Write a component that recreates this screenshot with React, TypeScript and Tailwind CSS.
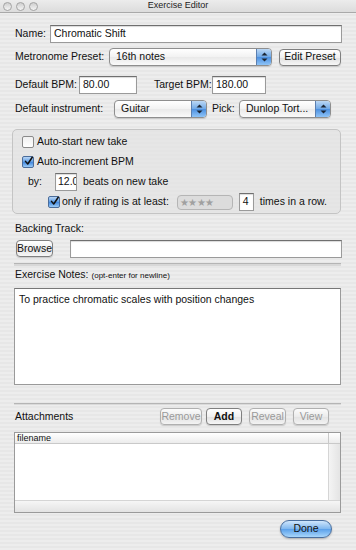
import React from "react";

const font = { fontFamily: '"Liberation Sans", Arial, sans-serif' };

function TextInput({ value, className = "" }: { value?: string; className?: string }) {
  return (
    <div
      className={
        "h-[18px] bg-white border border-[#9a9a9a] border-t-[#6f6f6f] shadow-[inset_0_1px_1px_rgba(0,0,0,0.15)] px-[3px] flex items-center text-[10.5px] text-[#111] overflow-hidden whitespace-nowrap " +
        className
      }
    >
      {value}
    </div>
  );
}

function PopUp({ value, className = "" }: { value: string; className?: string }) {
  return (
    <div
      className={
        "h-[18px] flex items-stretch rounded-[4px] border border-[#8e8e8e] bg-[linear-gradient(#ffffff,#f2f2f2_50%,#e9e9e9_51%,#fafafa)] shadow-[0_1px_1px_rgba(0,0,0,0.15)] overflow-hidden " +
        className
      }
    >
      <div className="flex-1 flex items-center pl-[6px] text-[10.5px] text-[#111] whitespace-nowrap overflow-hidden">{value}</div>
      <div className="w-[15px] flex flex-col items-center justify-center gap-[2px] bg-[linear-gradient(#bcd8f5,#6fa8e6_50%,#4b8fe0_51%,#8fc4f7)] border-l border-[#5b7fb0]">
        <svg width="7" height="4" viewBox="0 0 7 4"><path d="M0.5 3.5 L3.5 0.5 L6.5 3.5 Z" fill="#1b2533" /></svg>
        <svg width="7" height="4" viewBox="0 0 7 4"><path d="M0.5 0.5 L3.5 3.5 L6.5 0.5 Z" fill="#1b2533" /></svg>
      </div>
    </div>
  );
}

function Button({ label, disabled, className = "" }: { label: string; disabled?: boolean; className?: string }) {
  return (
    <div
      className={
        "h-[17px] flex items-center justify-center rounded-[4px] border text-[10.5px] whitespace-nowrap shadow-[0_1px_1px_rgba(0,0,0,0.15)] " +
        (disabled
          ? "border-[#b0b0b0] text-[#9a9a9a] bg-[linear-gradient(#fbfbfb,#ececec_50%,#e2e2e2_51%,#f3f3f3)] "
          : "border-[#7f7f7f] text-[#111] bg-[linear-gradient(#ffffff,#f0f0f0_50%,#e0e0e0_51%,#f7f7f7)] ") +
        className
      }
    >
      {label}
    </div>
  );
}

function Check({ checked }: { checked?: boolean }) {
  return (
    <div
      className={
        "w-[12px] h-[12px] rounded-[2px] border flex items-center justify-center shrink-0 " +
        (checked
          ? "border-[#4a6c9a] bg-[linear-gradient(#b9d6f6,#5c9ce4_50%,#3f86de_51%,#9cccf7)]"
          : "border-[#8a8a8a] bg-[linear-gradient(#f0f0f0,#ffffff)]")
      }
    >
      {checked && (
        <svg width="12" height="12" viewBox="0 0 12 12" className="-mt-[3px] ml-[1px]">
          <path d="M2 6.5 L5 10 L11 1" stroke="#111" strokeWidth="2" fill="none" strokeLinecap="round" strokeLinejoin="round" />
        </svg>
      )}
    </div>
  );
}

export default function App() {
  return (
    <div
      style={font}
      className="w-[356px] h-[550px] overflow-hidden text-[#111] text-[10.5px] bg-[repeating-linear-gradient(180deg,#ededed_0px,#ededed_2px,#e7e7e7_2px,#e7e7e7_4px)] flex flex-col"
    >
      {/* Title bar */}
      <div className="h-[13px] flex items-center relative border-b border-[#a9a9a9] bg-[linear-gradient(#ececec,#dcdcdc)]">
        <div className="flex gap-[4px] pl-[3px]">
          {[0, 1, 2].map((i) => (
            <div key={i} className="w-[9px] h-[9px] rounded-full border border-[#a3a3a3] bg-[linear-gradient(#cfcfcf,#f4f4f4)]" />
          ))}
        </div>
        <div className="absolute inset-0 flex items-center justify-center text-[9px] text-[#222]">Exercise Editor</div>
      </div>

      <div className="flex flex-col px-[14px] pt-[12px]">
        {/* Name */}
        <div className="flex items-center h-[18px]">
          <span className="w-[36px] pl-[1px]">Name:</span>
          <TextInput value="Chromatic Shift" className="w-[292px]" />
        </div>
        {/* Metronome */}
        <div className="flex items-center h-[18px] mt-[5px]">
          <span className="w-[95px] pl-[1px]">Metronome Preset:</span>
          <PopUp value="16th notes" className="w-[163px]" />
          <Button label="Edit Preset" className="w-[62px] ml-[7px]" />
        </div>
        {/* BPM */}
        <div className="flex items-center h-[18px] mt-[10px]">
          <span className="w-[65px] pl-[1px]">Default BPM:</span>
          <TextInput value="80.00" className="w-[58px]" />
          <span className="ml-[17px] w-[58px]">Target BPM:</span>
          <TextInput value="180.00" className="w-[54px]" />
        </div>
        {/* Instrument */}
        <div className="flex items-center h-[18px] mt-[6px]">
          <span className="w-[100px] pl-[1px]">Default instrument:</span>
          <PopUp value="Guitar" className="w-[93px]" />
          <span className="ml-[5px] w-[27px]">Pick:</span>
          <PopUp value="Dunlop Tort..." className="w-[92px]" />
        </div>

        {/* Box */}
        <div className="mt-[11px] h-[85px] -ml-[2px] w-[329px] rounded-[5px] border border-[#c4c4c4] bg-[#e3e3e3]/70 flex flex-col pl-[9px] pt-[4px]">
          <div className="flex items-center gap-[3px] h-[16px]">
            <Check />
            <span>Auto-start new take</span>
          </div>
          <div className="flex items-center gap-[3px] h-[16px] mt-[4px]">
            <Check checked />
            <span>Auto-increment BPM</span>
          </div>
          <div className="flex items-center h-[18px] mt-[3px]">
            <span className="ml-[6px] w-[27px]">by:</span>
            <TextInput value="12.0" className="w-[22px] !px-[2px]" />
            <span className="ml-[6px]">beats on new take</span>
          </div>
          <div className="flex items-center h-[16px] mt-[3px] pl-[26px]">
            <Check checked />
            <span className="ml-[2px]">only if rating is at least:</span>
            <div className="ml-[8px] w-[56px] h-[15px] rounded-[4px] border border-[#b5b5b5] bg-[#dcdcdc] flex items-center pl-[2px] text-[10px] text-[#a0a0a0] tracking-[-0.5px]">
              ★★★★
            </div>
            <TextInput value="4" className="ml-[6px] w-[15px] h-[17px]" />
            <span className="ml-[6px]">times in a row.</span>
          </div>
        </div>

        {/* Backing Track */}
        <div className="mt-[9px] h-[12px] flex items-center pl-[1px]">Backing Track:</div>
        <div className="flex items-center h-[17px] mt-[5px]">
          <Button label="Browse" className="w-[37px] ml-[2px]" />
          <TextInput value="" className="ml-[17px] w-[272px] h-[17px]" />
        </div>

        <div className="mt-[6px] h-[3px] w-[327px] border-t border-[#b5b5b5] bg-[#d8d8d8]" />

        <div className="mt-[4px] h-[13px] flex items-end pl-[1px]">
          <span>Exercise Notes:</span>
          <span className="ml-[3px] text-[8px] pb-[1px]">(opt-enter for newline)</span>
        </div>
        <div className="mt-[5px] w-[327px] h-[97px] bg-white border border-[#9a9a9a] border-t-[#777] px-[4px] pt-[3px]">
          To practice chromatic scales with position changes
        </div>

        <div className="mt-[18px] h-[2px] w-[327px] border-t border-[#b5b5b5] bg-[#dadada]" />

        {/* Attachments */}
        <div className="flex items-center h-[17px] mt-[3px]">
          <span className="w-[146px] pl-[1px]">Attachments</span>
          <Button label="Remove" disabled className="w-[42px]" />
          <Button label="Add" className="w-[36px] ml-[4px] font-bold" />
          <Button label="Reveal" disabled className="w-[37px] ml-[7px]" />
          <Button label="View" disabled className="w-[36px] ml-[7px]" />
        </div>

        <div className="mt-[7px] w-[327px] h-[81px] border border-[#9a9a9a] bg-white flex flex-col">
          <div className="flex h-[11px] border-b border-[#c9c9c9] bg-[linear-gradient(#ffffff,#ececec)]">
            <div className="flex-1 text-[9px] leading-[11px] pl-[2px]">filename</div>
            <div className="w-[12px] border-l border-[#c9c9c9]" />
          </div>
          <div className="flex-1 flex">
            <div className="flex-1" />
            <div className="w-[12px] border-l border-[#d5d5d5] bg-[linear-gradient(90deg,#f4f4f4,#e4e4e4)]" />
          </div>
          <div className="h-[12px] border-t border-[#d5d5d5] bg-[linear-gradient(#f6f6f6,#e3e3e3)]" />
        </div>

        {/* Done */}
        <div className="flex justify-end mt-[7px] pr-[10px]">
          <div className="w-[52px] h-[18px] rounded-full border border-[#4a6f9f] bg-[linear-gradient(#cfe6fc,#7eb6ee_50%,#5aa0ea_51%,#a8d6fb)] flex items-center justify-center text-[10.5px] text-[#111] shadow-[0_1px_2px_rgba(0,0,0,0.25)]">
            Done
          </div>
        </div>
      </div>
    </div>
  );
}
